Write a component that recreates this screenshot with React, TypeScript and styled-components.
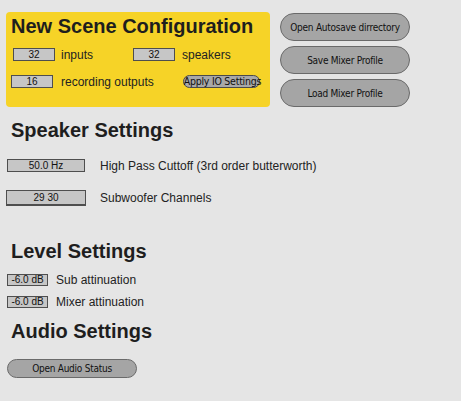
import React from "react";
import styled, { createGlobalStyle } from "styled-components";

const Global = createGlobalStyle`
  html, body { margin: 0; padding: 0; background: #e5e5e5; }
  body { font-family: "Liberation Sans", Arial, sans-serif; color: #1e1e1e; }
  * { box-sizing: border-box; }
`;

const Page = styled.div`
  width: 461px;
  height: 401px;
  padding-top: 12px;
  background: #e5e5e5;
`;

const TopRow = styled.div`
  display: flex;
  align-items: flex-start;
  gap: 10px;
  padding-left: 6px;
`;

const ScenePanel = styled.div`
  width: 264px;
  height: 95px;
  background: #f6d327;
  border-radius: 4px;
  padding: 4px 0 0 5px;
`;

const Heading = styled.h2<{ $top: number; $inset?: number }>`
  margin: ${(p) => p.$top}px 0 0 0;
  padding-left: ${(p) => p.$inset ?? 11}px;
  font-size: 20px;
  line-height: 20px;
  font-weight: 700;
  color: #1e1e1e;
`;

const ConfigRow = styled.div<{ $top: number; $inset: number }>`
  display: flex;
  align-items: center;
  margin-top: ${(p) => p.$top}px;
  padding-left: ${(p) => p.$inset}px;
  height: 13px;
`;

const Field = styled.div<{ $width?: number; $gap: number }>`
  display: flex;
  align-items: center;
  gap: ${(p) => p.$gap}px;
  width: ${(p) => (p.$width ? `${p.$width}px` : "auto")};
  flex: none;
`;

const NumBox = styled.div<{ $w: number; $h: number; $thick?: boolean }>`
  width: ${(p) => p.$w}px;
  height: ${(p) => p.$h}px;
  background: #c6c6c6;
  border: 1px solid #4e4e4e;
  border-bottom-width: ${(p) => (p.$thick ? 2 : 1)}px;
  display: flex;
  align-items: center;
  justify-content: center;
  font-size: 10px;
  line-height: 10px;
  color: #111;
  flex: none;
`;

const Label = styled.span`
  font-size: 12px;
  line-height: 12px;
  color: #222;
  white-space: nowrap;
`;

const PillSmall = styled.button`
  width: 77px;
  height: 13px;
  padding: 0;
  margin-left: 29px;
  border: 1px solid #4a4a4a;
  border-radius: 7px;
  background: #a8a8a8;
  font-family: "DejaVu Sans Condensed", "DejaVu Sans", sans-serif;
  font-stretch: condensed;
  font-size: 10.5px;
  line-height: 11px;
  letter-spacing: -0.25px;
  color: #111;
  white-space: nowrap;
`;

const ButtonColumn = styled.div`
  display: flex;
  flex-direction: column;
  gap: 5px;
  padding-top: 1px;
`;

const Pill = styled.button<{ $h?: number }>`
  width: 130px;
  height: ${(p) => p.$h ?? 28}px;
  padding: 0;
  border: 1px solid #6a6a6a;
  border-radius: 14px;
  background: #a5a5a5;
  font-family: "DejaVu Sans Condensed", "DejaVu Sans", sans-serif;
  font-stretch: condensed;
  font-size: 10px;
  letter-spacing: -0.25px;
  color: #111;
  white-space: nowrap;
`;

const SettingRow = styled.div<{ $top: number; $inset: number; $gap: number }>`
  display: flex;
  align-items: center;
  margin-top: ${(p) => p.$top}px;
  padding-left: ${(p) => p.$inset}px;
  gap: ${(p) => p.$gap}px;
`;

const ButtonRow = styled.div<{ $top: number }>`
  margin-top: ${(p) => p.$top}px;
  padding-left: 7px;
`;

export default function App() {
  return (
    <>
      <Global />
      <Page>
        <TopRow>
          <ScenePanel>
            <Heading $top={0} $inset={0}>New Scene Configuration</Heading>
            <ConfigRow $top={12} $inset={2}>
              <Field $width={120} $gap={6}>
                <NumBox $w={42} $h={13}>32</NumBox>
                <Label>inputs</Label>
              </Field>
              <Field $gap={7}>
                <NumBox $w={42} $h={13}>32</NumBox>
                <Label>speakers</Label>
              </Field>
            </ConfigRow>
            <ConfigRow $top={14} $inset={0}>
              <Field $gap={8}>
                <NumBox $w={42} $h={13}>16</NumBox>
                <Label>recording outputs</Label>
              </Field>
              <PillSmall>Apply IO Settings</PillSmall>
            </ConfigRow>
          </ScenePanel>
          <ButtonColumn>
            <Pill>Open Autosave dirrectory</Pill>
            <Pill>Save Mixer Profile</Pill>
            <Pill>Load Mixer Profile</Pill>
          </ButtonColumn>
        </TopRow>

        <Heading $top={13}>Speaker Settings</Heading>
        <SettingRow $top={19} $inset={7} $gap={15}>
          <NumBox $w={78} $h={13}>50.0 Hz</NumBox>
          <Label>High Pass Cuttoff (3rd order butterworth)</Label>
        </SettingRow>
        <SettingRow $top={18} $inset={6} $gap={14}>
          <NumBox $w={80} $h={16} $thick>29 30</NumBox>
          <Label>Subwoofer Channels</Label>
        </SettingRow>

        <Heading $top={35}>Level Settings</Heading>
        <SettingRow $top={13} $inset={7} $gap={8}>
          <NumBox $w={41} $h={12}>-6.0 dB</NumBox>
          <Label>Sub attinuation</Label>
        </SettingRow>
        <SettingRow $top={10} $inset={7} $gap={8}>
          <NumBox $w={41} $h={12}>-6.0 dB</NumBox>
          <Label>Mixer attinuation</Label>
        </SettingRow>

        <Heading $top={13}>Audio Settings</Heading>
        <ButtonRow $top={17}>
          <Pill $h={19}>Open Audio Status</Pill>
        </ButtonRow>
      </Page>
    </>
  );
}
